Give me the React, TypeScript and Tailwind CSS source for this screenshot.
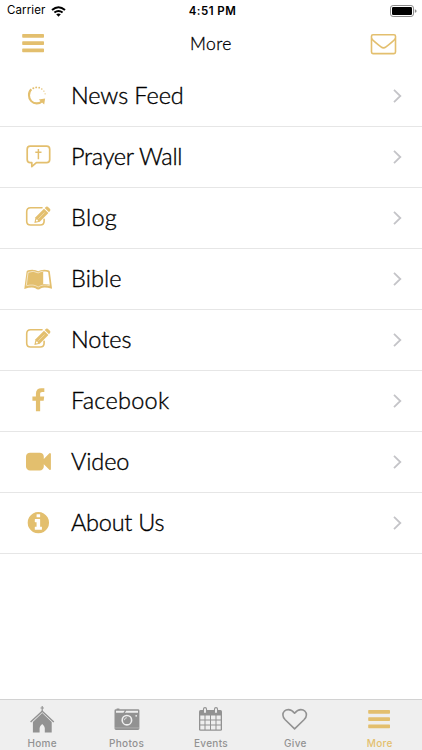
import React from 'react';

const EditIcon: React.FC = () => (
  <svg viewBox="0 0 28 28" className="h-7 w-7" fill="none">
    <path
      d="M18 3.8H6.6Q2.7 3.8 2.7 7.7V17.2Q2.7 21 6.6 21H16.2Q20.1 21 20.1 17.2V15.3"
      stroke="currentColor"
      strokeWidth="1.6"
      strokeLinecap="round"
    />
    <path d="M20 4.7L24.4 9.1L15.8 17.7L10.4 18.9L11.5 13.3Z" fill="currentColor" />
    <path d="M20.7 4L22.1 2.7Q22.9 2.1 23.8 2.8L26.1 5.1Q26.8 6 26.1 6.8L25 8.3Z" fill="currentColor" />
    <path d="M14.3 14.8L20.6 8.5" stroke="#fff" strokeWidth="0.4" />
    <circle cx="12.9" cy="16.4" r="1" fill="#fff" />
  </svg>
);

const NewsFeedIcon: React.FC = () => (
  <svg viewBox="0 0 28 28" className="h-7 w-7" fill="none">
    <path
      d="M7.3 7.2A8 8 0 0 0 5 13.4C5 18 8.4 21.4 12.7 21.4C15 21.4 16.7 20.5 18 19.2"
      stroke="currentColor"
      strokeWidth="2.1"
    />
    <path d="M14.8 17.4L21.1 16.5L20.2 22.6Z" fill="currentColor" />
    <g fill="currentColor">
      <circle cx="9.3" cy="6.2" r="1" />
      <circle cx="12.2" cy="5.4" r="0.95" />
      <circle cx="15.2" cy="5.7" r="0.9" />
      <circle cx="17.8" cy="7" r="0.8" />
      <circle cx="19.9" cy="9.1" r="0.7" />
      <circle cx="21.1" cy="11.8" r="0.6" />
    </g>
  </svg>
);

const PrayerIcon: React.FC = () => (
  <svg viewBox="0 0 28 28" className="h-7 w-7" fill="none" stroke="currentColor">
    <path
      d="M6.2 3.2H22.6Q25.7 3.2 25.7 6.3V16.5Q25.7 19.6 22.6 19.6H12.4L7.8 23.6V19.6H6.2Q3.2 19.6 3.2 16.5V6.3Q3.2 3.2 6.2 3.2Z"
      strokeWidth="1.7"
      strokeLinejoin="round"
    />
    <path d="M14.4 6V16.3M11.3 9.2H17.5" strokeWidth="1.5" />
  </svg>
);

const BibleIcon: React.FC = () => (
  <svg viewBox="0 0 28 28" className="h-7 w-7" fill="none">
    <path
      d="M2.6 6.4Q3 4.9 8.2 4.7Q12 4.7 14.2 6.3Q16.4 4.7 20.2 4.7Q25.4 4.9 25.8 6.4L28.1 23.9Q20.6 21.6 17 23.2Q15.5 24.4 14.2 24.4Q12.9 24.4 11.4 23.2Q7.8 21.6 0.3 23.9Z"
      fill="currentColor"
    />
    <path d="M19.2 6.6Q23.2 6.2 24.2 7.3L25.8 19.8Q22.3 18.8 19.2 19.1Z" fill="#fff" />
    <path
      d="M2.3 20.5L4.1 7.4Q9.2 5 14.2 7.9Q16.5 6.5 19.2 6.2"
      stroke="#fff"
      strokeWidth="0.6"
    />
    <path d="M2.6 20.7Q9.5 18.8 14.2 22Q18.9 18.8 25.8 20.7" stroke="#fff" strokeWidth="0.5" />
  </svg>
);

const FacebookIcon: React.FC = () => (
  <svg viewBox="0 0 28 28" className="h-7 w-7" fill="currentColor">
    <path
      transform="translate(1.8 1.2) scale(.0138)"
      d="M1343 12v264h-157q-86 0-116 36t-30 108v189h293l-39 296h-254v759h-306v-759h-255v-296h255v-218q0-186 104-288.5t277-102.5q147 0 228 12z"
    />
  </svg>
);

const VideoIcon: React.FC = () => (
  <svg viewBox="0 0 28 28" className="h-7 w-7" fill="currentColor">
    <path
      transform="translate(2 1.1) scale(.0139)"
      d="M1792 352v1088q0 42-39 59-13 5-25 5-27 0-45-19l-403-403v166q0 119-84.5 203.5t-203.5 84.5h-704q-119 0-203.5-84.5t-84.5-203.5v-704q0-119 84.5-203.5t203.5-84.5h704q119 0 203.5 84.5t84.5 203.5v165l403-402q18-19 45-19 12 0 25 5 39 17 39 59z"
    />
  </svg>
);

const InfoIcon: React.FC = () => (
  <svg viewBox="0 0 28 28" className="h-7 w-7" fill="currentColor">
    <path
      transform="translate(1.9 1.2) scale(.0139)"
      d="M1152 1376v-160q0-14-9-23t-23-9h-96v-512q0-14-9-23t-23-9h-320q-14 0-23 9t-9 23v160q0 14 9 23t23 9h96v320h-96q-14 0-23 9t-9 23v160q0 14 9 23t23 9h448q14 0 23-9t9-23zm-128-896v-160q0-14-9-23t-23-9h-192q-14 0-23 9t-9 23v160q0 14 9 23t23 9h192q14 0 23-9t9-23zm640 416q0 209-103 385.5t-279.5 279.5-385.5 103-385.5-103-279.5-279.5-103-385.5 103-385.5 279.5-279.5 385.5-103 385.5 103 279.5 279.5 103 385.5z"
    />
  </svg>
);

const HomeIcon: React.FC = () => (
  <svg viewBox="0 0 28 28" className="h-7 w-7" fill="none">
    <path d="M14.2 0V6M12.5 2H15.9" stroke="currentColor" strokeWidth="1.1" />
    <path d="M2.6 16L14.2 5.2L25.8 16" stroke="currentColor" strokeWidth="1.4" />
    <path
      d="M14.2 7L23.7 16V26.5H16.8V22Q16.6 19.8 14.2 17.9Q11.8 19.8 11.6 22V26.5H4.9V16Z"
      fill="currentColor"
    />
  </svg>
);

const PhotosIcon: React.FC = () => (
  <svg viewBox="0 0 28 28" className="h-7 w-7" fill="none">
    <path d="M3 3.2H3.6V2.6H6.4V3.2H25Q26.4 3.2 26.4 4.6V22.6Q26.4 24 25 24H3Q1.5 24 1.5 22.6V4.6Q1.5 3.2 3 3.2Z" fill="currentColor" />
    <path d="M3 4.7H11.8L10.4 6.7H3ZM13.2 4.7H25V6.7H11.9Z" fill="#efefef" />
    <path d="M1.5 21.9H26.4" stroke="#efefef" strokeWidth="0.3" />
    <circle cx="13.9" cy="14.2" r="4.7" stroke="#efefef" strokeWidth="1.6" />
    <path d="M11.4 14.2A2.5 2.5 0 0 1 13.9 11.7" stroke="#efefef" strokeWidth="0.8" />
    <circle cx="23.2" cy="9.8" r="0.9" fill="#efefef" />
  </svg>
);

const EventsIcon: React.FC = () => (
  <svg viewBox="0 0 28 28" className="h-7 w-7" fill="none">
    <path d="M3.5 4H23.5Q25 4 25 5.5V23.3Q25 24.8 23.5 24.8H3.5Q2 24.8 2 23.3V5.5Q2 4 3.5 4Z" fill="currentColor" />
    <g fill="#efefef">
      <path d="M3.3 9.5H7.5V13.5H3.3ZM8.5 9.5H13V13.5H8.5ZM14 9.5H18.5V13.5H14ZM19.5 9.5H23.7V13.5H19.5Z" />
      <path d="M3.3 14.5H7.5V18.5H3.3ZM8.5 14.5H13V18.5H8.5ZM14 14.5H18.5V18.5H14ZM19.5 14.5H23.7V18.5H19.5Z" />
      <path d="M3.3 19.5H7.5V23.4H3.3ZM8.5 19.5H13V23.4H8.5ZM14 19.5H18.5V23.4H14ZM19.5 19.5H23.7V23.4H19.5Z" />
    </g>
    <g fill="#efefef" stroke="currentColor" strokeWidth="1.1">
      <rect x="6.5" y="1.6" width="3" height="6" rx="1.5" />
      <rect x="17.5" y="1.6" width="3" height="6" rx="1.5" />
    </g>
  </svg>
);

const GiveIcon: React.FC = () => (
  <svg viewBox="0 0 28 28" className="h-7 w-7" fill="none">
    <path
      d="M13.6 22.9L4.2 13.8Q1.9 11.3 1.9 9C1.9 5.7 4.3 3.6 7.3 3.6C9.9 3.6 11.8 5 13.6 7.2C15.4 5 17.3 3.6 19.9 3.6C22.9 3.6 25.4 5.7 25.4 9Q25.4 11.3 23 13.8Z"
      stroke="currentColor"
      strokeWidth="1.6"
      strokeLinejoin="round"
    />
  </svg>
);

const BarsIcon: React.FC = () => (
  <svg viewBox="0 0 28 28" className="h-7 w-7" fill="currentColor">
    <rect x="2.2" y="4" width="21.8" height="3.8" rx="0.7" />
    <rect x="2.2" y="11.2" width="21.8" height="3.8" rx="0.7" />
    <rect x="2.2" y="18.4" width="21.8" height="3.8" rx="0.7" />
  </svg>
);

const menuItems = [
  { label: 'News Feed', icon: NewsFeedIcon, tracking: 'tracking-[-0.1px]' },
  { label: 'Prayer Wall', icon: PrayerIcon, tracking: 'tracking-[-0.3px]' },
  { label: 'Blog', icon: EditIcon, tracking: 'tracking-[0.3px]' },
  { label: 'Bible', icon: BibleIcon, tracking: 'tracking-[0.1px]' },
  { label: 'Notes', icon: EditIcon, tracking: 'tracking-[0px]' },
  { label: 'Facebook', icon: FacebookIcon, tracking: 'tracking-[0.25px]' },
  { label: 'Video', icon: VideoIcon, tracking: 'tracking-[-0.15px]' },
  { label: 'About Us', icon: InfoIcon, tracking: 'tracking-[-0.25px]' },
];

const tabs = [
  { label: 'Home', icon: HomeIcon, active: false },
  { label: 'Photos', icon: PhotosIcon, active: false },
  { label: 'Events', icon: EventsIcon, active: false },
  { label: 'Give', icon: GiveIcon, active: false },
  { label: 'More', icon: BarsIcon, active: true },
];

const StatusBar: React.FC = () => (
  <div className="grid h-[22px] grid-cols-3 items-center pl-[7px] pr-1 font-['Inter',sans-serif] text-[11.5px] text-black">
    <div className="flex items-center gap-1.5">
      <span className="tracking-[0.1px]">Carrier</span>
      <svg viewBox="0 0 15 11" className="h-[11px] w-[15px]" fill="none" stroke="#000">
        <path d="M1 4Q7.5 -1.6 14 4" strokeWidth="2" />
        <path d="M3.4 6.6Q7.5 3.2 11.6 6.6" strokeWidth="1.9" />
        <path d="M5.2 8.3Q7.5 6.6 9.8 8.3L7.5 10.7Z" fill="#000" stroke="none" />
      </svg>
    </div>
    <span className="pt-px text-center font-semibold tracking-[0.45px]">4:51 PM</span>
    <svg viewBox="0 0 28 12" className="h-3 w-7 justify-self-end" fill="none">
      <rect x="0.5" y="0.5" width="23" height="11" rx="2.6" stroke="#8a8a8a" />
      <rect x="2" y="2" width="20" height="8" rx="1.2" fill="#000" />
      <path d="M24.8 4.2Q26.6 4.6 26.6 6T24.8 7.8Z" fill="#8a8a8a" />
    </svg>
  </div>
);

const App: React.FC = () => {
  return (
    <div className="flex h-[750px] w-[422px] flex-col overflow-hidden bg-white font-['Lato',sans-serif]">
      <StatusBar />

      <header className="grid h-11 grid-cols-3 items-center pl-5 pr-[25px] text-[#e3bf6e]">
        <BarsIcon />
        <h1 className="pl-[5px] text-center text-[17.5px] font-light leading-none tracking-[0.4px] text-black [-webkit-text-stroke:0.3px]">
          More
        </h1>
        <svg viewBox="0 0 28 28" className="h-7 w-7 justify-self-end" fill="none" stroke="currentColor" strokeWidth="1.6">
          <rect x="2.5" y="4.8" width="24" height="18.8" rx="1.5" />
          <path d="M2.5 8.6Q5 11.8 12 16.9Q14.5 18.9 17 16.9Q24 11.8 26.5 8.6" />
        </svg>
      </header>

      <ul>
        {menuItems.map(({ label, icon: Icon, tracking }) => (
          <li key={label} className="flex h-[61px] items-center border-b border-[#e6e6e6] pl-6 pr-5">
            <span className="text-[#e3bf6e]">
              <Icon />
            </span>
            <span
              className={`ml-[19px] flex-1 text-[23.5px] font-light leading-none text-black [-webkit-text-stroke:0.35px] ${tracking}`}
            >
              {label}
            </span>
            <svg viewBox="0 0 9 14" className="h-3.5 w-[9px]" fill="none" stroke="#c4c4c8" strokeWidth="1.8">
              <path d="M1 0.9L7.3 7L1 13.1" />
            </svg>
          </li>
        ))}
      </ul>

      <nav className="mt-auto grid h-[51px] grid-cols-5 border-t border-[#d2d2d2] bg-[#efefef] pt-1.5">
        {tabs.map(({ label, icon: Icon, active }) => (
          <div
            key={label}
            className={`flex flex-col items-center ${active ? 'text-[#e3bf6e]' : 'text-[#929292]'}`}
          >
            <Icon />
            <span className="mt-[3px] font-['Inter',sans-serif] text-[10px] font-medium leading-3 tracking-[0.3px]">
              {label}
            </span>
          </div>
        ))}
      </nav>
    </div>
  );
};

export default App;
